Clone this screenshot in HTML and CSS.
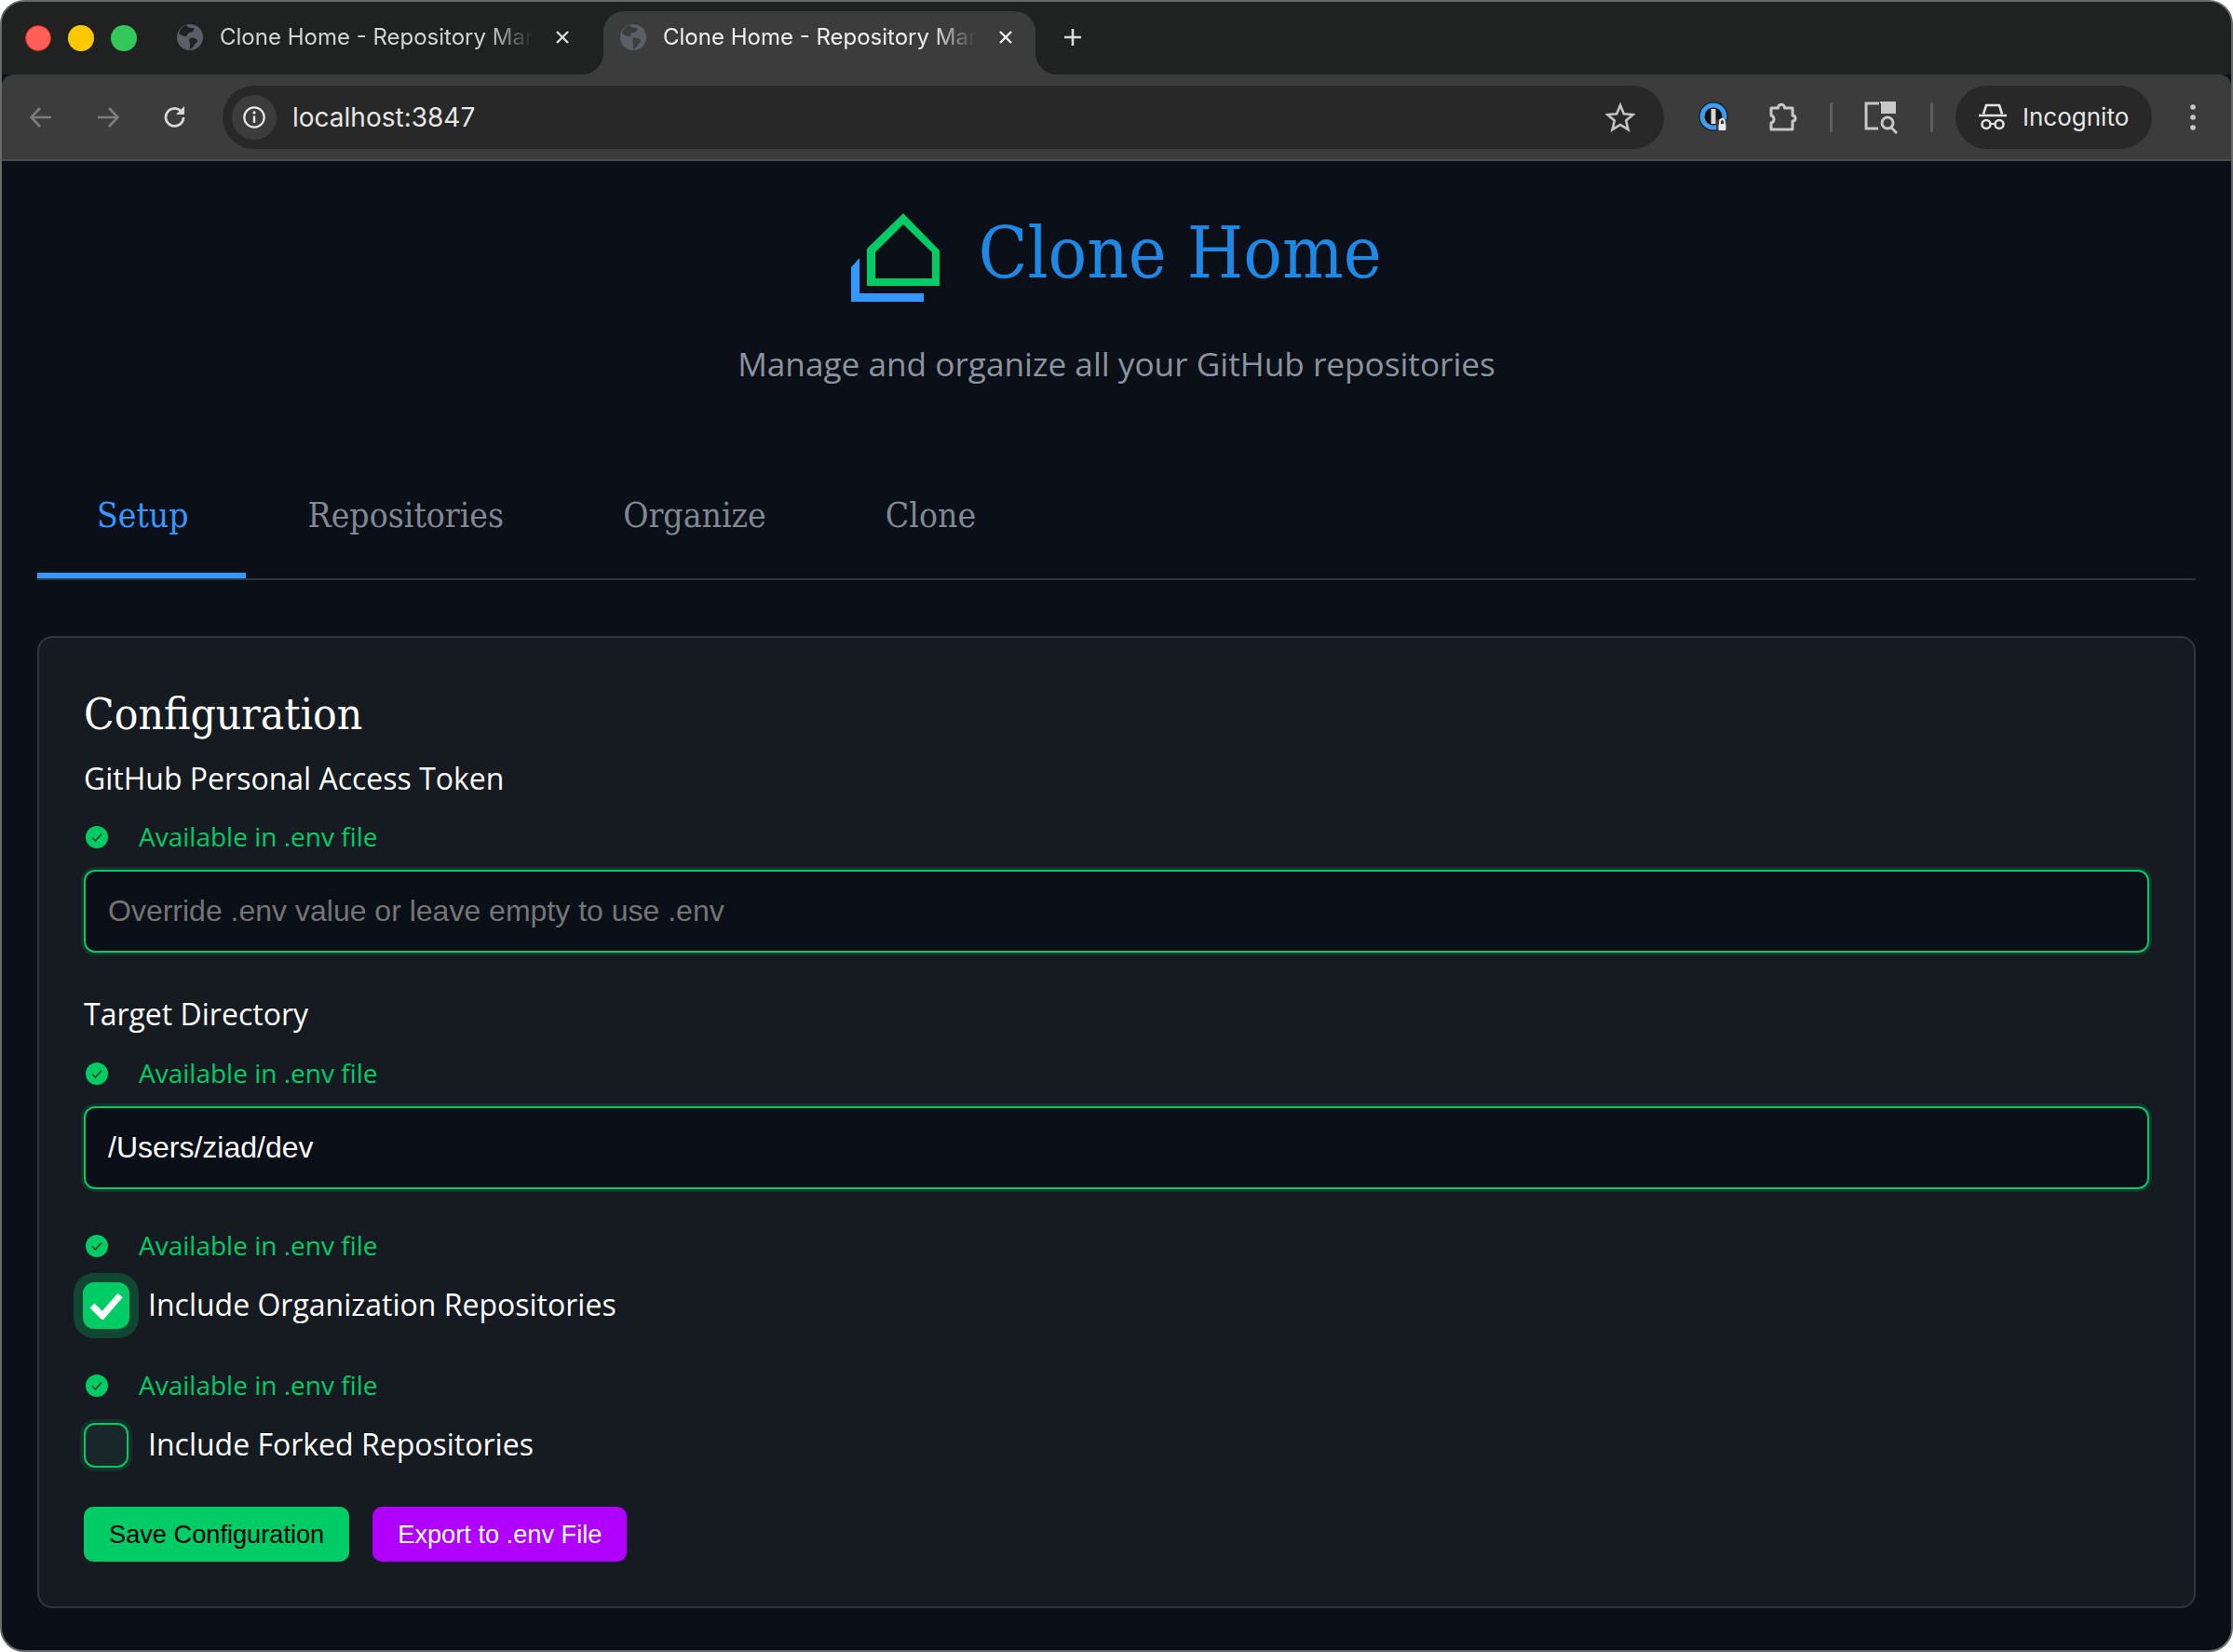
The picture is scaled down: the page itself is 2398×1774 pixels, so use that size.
FILE: index.html
```html
<!DOCTYPE html>
<html lang="en">
<head>
    <meta charset="UTF-8">
    <meta name="viewport" content="width=device-width, initial-scale=1.0">
    <title>Clone Home</title>
    <link rel="stylesheet" href="styles.css">
</head>
<body>

<div class="window">
    <div class="tabstrip">
        <div class="lights">
            <span class="light red"></span>
            <span class="light yellow"></span>
            <span class="light green"></span>
        </div>
        <div class="tab">
            <svg class="globe" viewBox="0 0 28 28"><circle cx="14" cy="14" r="14" fill="#5b5e66"/><path d="M10 1c2 3 5 3 8 3 1 2-1 5-4 5-3 0-2 3-4 4-3 0-5-1-8-3 1-4 4-8 8-9zM14 15c3-1 6 0 8 2 1 2-2 3-3 5-1 2-3 4-5 5-1-3 1-5 0-7-1-2-1-3 0-5z" fill="#202221"/></svg>
            <span class="tab-title">Clone Home - Repository Mar</span>
            <svg class="tab-close" viewBox="0 0 16 16"><path d="M2 2l12 12M14 2L2 14" stroke="#dcdcdc" stroke-width="2.4"/></svg>
        </div>
        <div class="tab active">
            <svg class="globe" viewBox="0 0 28 28"><circle cx="14" cy="14" r="14" fill="#5b5e66"/><path d="M10 1c2 3 5 3 8 3 1 2-1 5-4 5-3 0-2 3-4 4-3 0-5-1-8-3 1-4 4-8 8-9zM14 15c3-1 6 0 8 2 1 2-2 3-3 5-1 2-3 4-5 5-1-3 1-5 0-7-1-2-1-3 0-5z" fill="#3c3c3c"/></svg>
            <span class="tab-title">Clone Home - Repository Mar</span>
            <svg class="tab-close" viewBox="0 0 16 16"><path d="M2 2l12 12M14 2L2 14" stroke="#f0f0f0" stroke-width="2.4"/></svg>
        </div>
        <svg class="new-tab" viewBox="0 0 20 20"><path d="M10 1v18M1 10h18" stroke="#dcdcdc" stroke-width="2.6"/></svg>
    </div>

    <div class="toolbar">
        <svg class="tool nav-back" viewBox="0 0 28 28"><path d="M25 14H4M13 4L3.500 14 13 24" fill="none" stroke="#7c7c7c" stroke-width="2.600"/></svg>
        <svg class="tool nav-fwd" viewBox="0 0 28 28"><path d="M3 14h21M15 4l9.500 10L15 24" fill="none" stroke="#7c7c7c" stroke-width="2.600"/></svg>
        <svg class="tool nav-reload" viewBox="0 0 28 28"><path d="M23 14a9.500 9.500 0 1 1-3-7" fill="none" stroke="#d6d6d6" stroke-width="2.800"/><path d="M24 2v9h-9z" fill="#d6d6d6"/></svg>
        <div class="omnibox">
            <span class="site-info">
                <svg viewBox="0 0 28 28"><circle cx="14" cy="14" r="11.500" fill="none" stroke="#e8e8e8" stroke-width="2.400"/><path d="M14 12.500v8" stroke="#e8e8e8" stroke-width="2.600"/><circle cx="14" cy="8.500" r="1.700" fill="#e8e8e8"/></svg>
            </span>
            <span class="url">localhost:3847</span>
            <svg class="star" viewBox="0 0 32 32"><path d="M16 3l3.800 9.200 9.900.8-7.500 6.500 2.300 9.700L16 24l-8.500 5.200 2.300-9.700L2.300 13l9.900-.8z" fill="none" stroke="#c4c4c4" stroke-width="2.600" stroke-linejoin="miter"/></svg>
        </div>
        <svg class="ext-pass" viewBox="0 0 34 34"><circle cx="16" cy="16" r="15.500" fill="#111"/><circle cx="16" cy="16" r="12" fill="none" stroke="#3d9bf2" stroke-width="5"/><rect x="13.500" y="8" width="5" height="16" fill="#d8d8d8"/><rect x="19" y="19" width="13" height="13" rx="3" fill="#3c3c3c"/><path d="M23 24v-2.500a2.500 2.500 0 0 1 5 0V24" fill="none" stroke="#e8e8e8" stroke-width="1.800"/><rect x="21.500" y="24" width="8" height="7" rx="1" fill="#e8e8e8"/></svg>
        <svg class="ext-puzzle" viewBox="0 0 32 34"><path d="M4 7h7.500c0-5 7-5 7 0H27v8c4 0 4 6 0 6v9H4v-7c4-1 4-7 0-8z" fill="none" stroke="#c8c8c8" stroke-width="3" stroke-linejoin="round"/></svg>
        <span class="sep"></span>
        <svg class="ext-reader" viewBox="0 0 36 36"><path d="M16 3H2v27h13" fill="none" stroke="#c8c8c8" stroke-width="3"/><path d="M18 1h16v13H18z" fill="#c8c8c8"/><path d="M17 2h17M33 2v12" stroke="#c8c8c8" stroke-width="2"/><circle cx="25" cy="24" r="6" fill="none" stroke="#c8c8c8" stroke-width="3"/><path d="M29 29l6 6" stroke="#c8c8c8" stroke-width="3"/></svg>
        <span class="sep"></span>
        <div class="incognito">
            <svg viewBox="0 0 30 30"><path d="M0 13h30" stroke="#e2e2e2" stroke-width="2.600"/><path d="M5 11.500L8 2h14l3 9.500" fill="none" stroke="#e2e2e2" stroke-width="2.600"/><circle cx="8" cy="22.500" r="4.500" fill="none" stroke="#e2e2e2" stroke-width="2.600"/><circle cx="22" cy="22.500" r="4.500" fill="none" stroke="#e2e2e2" stroke-width="2.600"/><path d="M12.500 22h5" stroke="#e2e2e2" stroke-width="2.200"/></svg>
            <span>Incognito</span>
        </div>
        <svg class="menu-dots" viewBox="0 0 6 30"><circle cx="3" cy="4" r="2.800" fill="#c8c8c8"/><circle cx="3" cy="15" r="2.800" fill="#c8c8c8"/><circle cx="3" cy="26" r="2.800" fill="#c8c8c8"/></svg>
    </div>

    <div class="page">
        <header class="header">
            <div class="brand">
                <svg class="logo" viewBox="0 0 96 96">
                    <path d="M0 58l9-10v38h69v9H0z" fill="#3399ff"/>
                    <path fill-rule="evenodd" d="M56 0l39 40v38H17V38zM56 12L26 42v28h61V42z" fill="#00cc66"/>
                </svg>
                <h1>Clone Home</h1>
            </div>
            <p class="subtitle">Manage and organize all your GitHub repositories</p>
        </header>

        <nav class="tabs">
            <div class="nav-tab selected">Setup</div>
            <div class="nav-tab">Repositories</div>
            <div class="nav-tab">Organize</div>
            <div class="nav-tab">Clone</div>
        </nav>

        <section class="card">
            <h2>Configuration</h2>

            <div class="field">
                <label class="field-label">GitHub Personal Access Token</label>
                <div class="env-status">
                    <svg viewBox="0 0 24 24"><circle cx="12" cy="12" r="12" fill="#00cc66"/><path d="M7 12.500l3.500 3.500 6.500-7.500" fill="none" stroke="#0b3a24" stroke-width="1.500"/></svg>
                    <span>Available in .env file</span>
                </div>
                <input class="text-input" type="text" placeholder="Override .env value or leave empty to use .env">
            </div>

            <div class="field">
                <label class="field-label">Target Directory</label>
                <div class="env-status">
                    <svg viewBox="0 0 24 24"><circle cx="12" cy="12" r="12" fill="#00cc66"/><path d="M7 12.500l3.500 3.500 6.500-7.500" fill="none" stroke="#0b3a24" stroke-width="1.500"/></svg>
                    <span>Available in .env file</span>
                </div>
                <input class="text-input" type="text" value="/Users/ziad/dev">
            </div>

            <div class="check-field">
                <div class="env-status">
                    <svg viewBox="0 0 24 24"><circle cx="12" cy="12" r="12" fill="#00cc66"/><path d="M7 12.500l3.500 3.500 6.500-7.500" fill="none" stroke="#0b3a24" stroke-width="1.500"/></svg>
                    <span>Available in .env file</span>
                </div>
                <div class="check-row">
                    <span class="checkbox checked">
                        <svg viewBox="0 0 36 30"><path d="M3 15l11 11L33 4" fill="none" stroke="#fff" stroke-width="7"/></svg>
                    </span>
                    <span class="check-label">Include Organization Repositories</span>
                </div>
            </div>

            <div class="check-field">
                <div class="env-status">
                    <svg viewBox="0 0 24 24"><circle cx="12" cy="12" r="12" fill="#00cc66"/><path d="M7 12.500l3.500 3.500 6.500-7.500" fill="none" stroke="#0b3a24" stroke-width="1.500"/></svg>
                    <span>Available in .env file</span>
                </div>
                <div class="check-row">
                    <span class="checkbox"></span>
                    <span class="check-label">Include Forked Repositories</span>
                </div>
            </div>

            <div class="actions">
                <button class="btn btn-save">Save Configuration</button>
                <button class="btn btn-export">Export to .env File</button>
            </div>
        </section>
    </div>
</div>

</body>
</html>
```

FILE: styles.css
```css
* {
    box-sizing: border-box;
}
html, body {
    margin: 0;
    height: 100%;
    background-color: #fff;
}
body {
    font-family: "Open Sans", sans-serif;
}
.window {
    height: 1774px;
    border: 2px solid #6a6a6a;
    border-radius: 26px;
    overflow: hidden;
    display: flex;
    flex-direction: column;
    background-color: #0b0f17;
}

/* browser chrome */
.tabstrip {
    height: 78px;
    flex-shrink: 0;
    display: flex;
    background-color: #202221;
    font-family: Inter, sans-serif;
    font-size: 24px;
    color: #d4d4d4;
}
.lights {
    display: flex;
    gap: 18px;
    padding: 25px 0 0 25px;
    width: 180px;
}
.light {
    width: 28px;
    height: 28px;
    border-radius: 50%;
}
.red { background-color: #ff5f57; border: 1px solid #e0242a; }
.yellow { background-color: #fdc800; }
.green { background-color: #34c759; }
.tab {
    width: 466px;
    margin-top: 10px;
    display: flex;
    align-items: flex-start;
    padding: 14px 36px 0 8px;
    position: relative;
}
.tab.active {
    width: 464px;
    background-color: #3c3c3c;
    border-radius: 22px 22px 0 0;
    color: #f0f0f0;
    padding: 14px 24px 0 18px;
}
.tab.active::before,
.tab.active::after {
    content: "";
    position: absolute;
    bottom: 0;
    width: 24px;
    height: 24px;
}
.tab.active::before {
    left: -24px;
    background: radial-gradient(circle at 0 0, transparent 24px, #3c3c3c 24.500px);
}
.tab.active::after {
    right: -24px;
    background: radial-gradient(circle at 100% 0, transparent 24px, #3c3c3c 24.500px);
}
.globe {
    width: 28px;
    height: 28px;
    flex-shrink: 0;
    margin-right: 18px;
}
.tab-title {
    flex: 1;
    min-width: 0;
    white-space: nowrap;
    line-height: 28px;
    -webkit-mask-image: linear-gradient(to right, #000 86%, transparent 100%);
    mask-image: linear-gradient(to right, #000 86%, transparent 100%);
}
.tab-close {
    width: 16px;
    height: 16px;
    margin: 6px 0 0 24px;
    flex-shrink: 0;
}
.new-tab {
    width: 20px;
    height: 20px;
    margin: 28px 0 0 30px;
}
.toolbar {
    height: 93px;
    flex-shrink: 0;
    display: flex;
    align-items: center;
    background-color: #3c3c3c;
    border-bottom: 2px solid #4a4a4a;
    border-radius: 12px 12px 0 0;
    position: relative;
}
.tool {
    width: 28px;
    height: 28px;
    flex-shrink: 0;
}
.nav-back { margin-left: 28px; }
.nav-fwd { margin-left: 44px; }
.nav-reload { margin-left: 44px; }
.omnibox {
    margin-left: 37px;
    width: 1548px;
    height: 68px;
    border-radius: 34px;
    background-color: #282828;
    display: flex;
    align-items: center;
    padding: 0 31px 0 10px;
    flex-shrink: 0;
}
.site-info {
    width: 48px;
    height: 48px;
    border-radius: 50%;
    background-color: #3c3c3c;
    display: flex;
    align-items: center;
    justify-content: center;
}
.site-info svg {
    width: 26px;
    height: 26px;
}
.url {
    flex: 1;
    margin-left: 17px;
    font-family: Inter, sans-serif;
    font-size: 28px;
    color: #e6e6e6;
}
.star {
    width: 32px;
    height: 32px;
}
.ext-pass {
    width: 34px;
    height: 34px;
    margin-left: 37px;
}
.ext-puzzle {
    width: 32px;
    height: 34px;
    margin-left: 40px;
}
.sep {
    width: 3px;
    height: 32px;
    background-color: #5e5e5e;
    margin-left: 35px;
    border-radius: 2px;
}
.ext-reader {
    width: 36px;
    height: 36px;
    margin-left: 34px;
}
.incognito {
    margin-left: 24px;
    width: 211px;
    height: 68px;
    border-radius: 34px;
    background-color: #282828;
    display: flex;
    align-items: center;
    padding-left: 25px;
    gap: 17px;
    font-family: Inter, sans-serif;
    font-size: 26px;
    color: #e6e6e6;
}
.incognito svg {
    width: 30px;
    height: 30px;
}
.menu-dots {
    width: 6px;
    height: 30px;
    margin-left: 41px;
}

/* page */
.page {
    flex: 1;
    padding: 0 38px;
}
.header {
    text-align: center;
    padding-top: 56px;
}
.brand {
    display: flex;
    justify-content: center;
    align-items: center;
    gap: 40px;
    height: 96px;
}
.logo {
    width: 96px;
    height: 96px;
}
h1 {
    margin: 0;
    font-family: "DejaVu Serif Condensed", "DejaVu Serif", serif;
    font-weight: 400;
    font-size: 77px;
    color: #1e88e5;
    line-height: 96px;
    position: relative;
    top: -5px;
}
.subtitle {
    margin: 40px 0 0;
    font-size: 35.2px;
    line-height: 50px;
    color: #8b949e;
}
.tabs {
    display: flex;
    margin-top: 64px;
    border-bottom: 2px solid #30363d;
}
.nav-tab {
    padding: 49px 64px 35px;
    font-family: "DejaVu Serif Condensed", "DejaVu Serif", serif;
    font-size: 37px;
    line-height: 52px;
    color: #808892;
    border-bottom: 6px solid transparent;
}
.nav-tab.selected {
    color: #3399ff;
    border-bottom-color: #3399ff;
    padding-right: 61px;
    margin-right: 3px;
}
.card {
    margin-top: 60px;
    padding: 51px 48px 48px;
    background-color: #161b22;
    border: 2px solid #30363d;
    border-radius: 16px;
}
h2 {
    margin: 0 0 16px;
    font-family: "DejaVu Serif Condensed", "DejaVu Serif", serif;
    font-weight: 400;
    font-size: 47.5px;
    line-height: 62px;
    color: #fff;
}
.field {
    margin-bottom: 44px;
}
.field + .field {
    margin-bottom: 41px;
}
.field-label {
    display: block;
    font-size: 32px;
    line-height: 44px;
    color: #fff;
}
.env-status {
    display: flex;
    align-items: center;
    gap: 33px;
    height: 40px;
    font-size: 28px;
    font-weight: 500;
    color: #00cc66;
}
.env-status span {
    position: relative;
    top: -1px;
}
.env-status svg {
    width: 24px;
    height: 24px;
    margin-left: 2px;
}
.field .env-status {
    margin-top: 21px;
}
.field + .field .env-status {
    margin-top: 22px;
}
.text-input {
    display: block;
    width: 100%;
    height: 89px;
    margin-top: 15px;
    padding: 0 24px;
    font-family: "Liberation Sans", Arial, sans-serif;
    font-size: 32px;
    color: #fff;
    background-color: #0b0f17;
    border: 2px solid #00cc66;
    border-radius: 12px;
    box-shadow: 0 0 0 3px rgba(0, 204, 102, 0.15);
    outline: none;
}
.text-input::placeholder {
    color: #757575;
}
.check-field {
    margin-bottom: 41px;
}
.check-row {
    display: flex;
    align-items: center;
    height: 50px;
    margin-top: 19px;
    gap: 21px;
    font-size: 32px;
    color: #fff;
}
.check-label {
    position: relative;
    top: -2px;
}
.checkbox {
    width: 48px;
    height: 48px;
    flex-shrink: 0;
    border: 2px solid #00cc66;
    border-radius: 12px;
    background-color: #19262a;
    box-shadow: 0 0 0 4px rgba(0, 204, 102, 0.12);
    display: flex;
    align-items: center;
    justify-content: center;
}
.checkbox.checked {
    width: 50px;
    height: 50px;
    margin-left: -1px;
    margin-right: -1px;
    background-color: #00cc66;
    box-shadow: 0 0 0 10px rgba(0, 204, 102, 0.25);
}
.checkbox svg {
    width: 36px;
    height: 30px;
}
.actions {
    display: flex;
    gap: 25px;
    margin-top: 40px;
}
.btn {
    height: 59px;
    padding: 0 27px;
    border: none;
    border-radius: 10px;
    font-family: "Liberation Sans", Arial, sans-serif;
    font-size: 27.2px;
}
.btn-save {
    background-color: #00cc66;
    color: #000;
}
.btn-export {
    background-color: #b000ff;
    color: #fff;
}
```
